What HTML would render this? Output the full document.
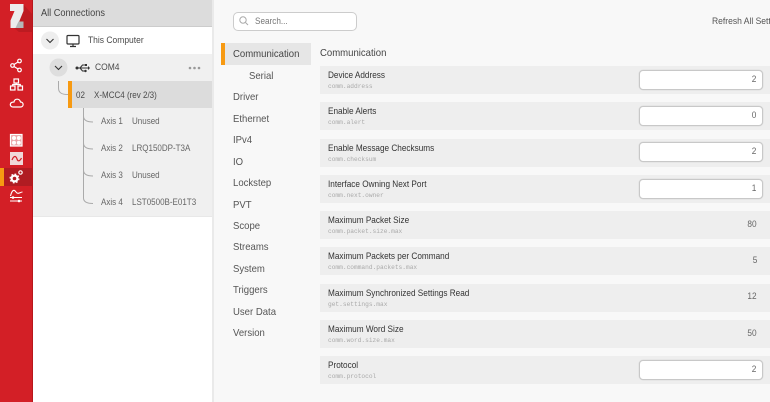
<!DOCTYPE html>
<html><head><meta charset="utf-8">
<style>
html,body{margin:0;padding:0;width:770px;height:402px;overflow:hidden;background:#f8f8f8;font-family:"Liberation Sans",sans-serif;color:#4a4a4a}
div,span{position:absolute;white-space:nowrap}
.t{font-size:9.6px;line-height:12px;transform:scaleX(.885);transform-origin:0 50%}
.a{color:#666;font-size:9.4px;transform:scaleX(.855)}
.n{font-size:10.5px;line-height:14px;left:233px;color:#555;transform:scaleX(.91);transform-origin:0 50%}
.r{left:320px;width:450px;height:28px;background:#eeeeee}
.l{left:8px;top:3px;font-size:9.4px;line-height:12px;color:#333;transform:scaleX(.875);transform-origin:0 50%}
.m{left:8px;top:16px;font-family:"Liberation Mono",monospace;font-size:6.2px;line-height:9px;color:#aaa}
.i{left:318.5px;top:3.5px;width:122px;height:18px;background:#fff;border:1px solid #c8c8c8;border-radius:4px;box-shadow:0 0 0 .5px #ddd}
.i span{right:5px;top:3px;font-size:9.5px;line-height:12px;color:#666;transform:scaleX(.87);transform-origin:100% 50%}
.v{right:13px;top:7.500px;font-size:9.5px;line-height:12px;color:#666;transform:scaleX(.87);transform-origin:100% 50%}
</style></head><body>
<div style="left:0;top:0;width:32px;height:402px;background:#d31f26"></div>
<div style="left:32px;top:0;width:1px;height:402px;background:#b8161c"></div>
<svg style="position:absolute;left:0;top:0" width="33" height="402" viewBox="0 0 33 402">
<path d="M23 4 L32 14 V32 H19 L14 28Z" fill="#bd1b21"/>
<path d="M10 4H23.500V11L19 22V28H10.500V20.500L14.500 11H10Z" fill="#ececec"/>
<path d="M18.500 21.500H23.500V28H15.500Z" fill="#b4b8b8"/>
<g fill="none" stroke="#fff" stroke-width="1.200">
<circle cx="19.500" cy="61" r="1.800"/><circle cx="12.500" cy="65.500" r="1.800"/><circle cx="19.500" cy="70" r="1.800"/><path d="M14 64.500 18 62M14 66.500 18 69"/>
<rect x="14" y="79" width="4.500" height="4"/><rect x="10.500" y="86" width="4.500" height="4"/><rect x="18" y="86" width="4.500" height="4"/><path d="M16.200 83V84.500M12.700 86V84.500H20.300V86"/>
<path d="M13 107H20.500C24 107 24 102 20.500 102C19.500 98 14.500 98.500 14 102C9 102 9.500 107 13 107Z"/>
</g>
<g fill="#fff">
<path d="M10.500 134.500H22V146H10.500Z" fill="#e9a5a8" stroke="#fff" stroke-width="1.200"/>
<circle cx="14" cy="138" r="2"/><circle cx="18.800" cy="138" r="2"/><circle cx="14" cy="142.800" r="2"/><circle cx="18.800" cy="142.800" r="2"/>
<rect x="10" y="152" width="13" height="13" fill="#f0d8d8"/>
</g>
<path d="M12 160C14 155 16 156 17 159C18 162 20 161 21.500 158" fill="none" stroke="#d31f26" stroke-width="1.200"/>
<rect x="0" y="168" width="32" height="18" fill="#b01c22"/>
<rect x="0" y="168" width="4" height="18" fill="#f79a12"/>
<g fill="none" stroke="#fff">
<circle cx="14.500" cy="178.500" r="2.900" stroke-width="2.200"/>
<circle cx="14.500" cy="178.500" r="4.400" stroke-width="1.200" stroke-dasharray="1.700 1.750"/>
<circle cx="20.500" cy="172.500" r="1.700" stroke-width="1.200"/>
<path d="M10.500 196C12 190 14 189 16 192C18 195 20 192 22.500 192M10 197.500H22M10 201H22" stroke-width="1.100"/>
</g>
<circle cx="13" cy="197.500" r="1.300" fill="#fff"/><circle cx="19" cy="201" r="1.300" fill="#fff"/>
</svg>

<div style="left:33px;top:0;width:179px;height:402px;background:#fff"></div>
<div style="left:212px;top:0;width:2px;height:402px;background:#eaeaea"></div>
<div style="left:33px;top:0;width:179px;height:26px;background:#dcdcdc;border-bottom:1px solid #ccc"></div>
<div class="t" style="left:41px;top:8px;color:#444;font-size:10px;transform:scaleX(.92)">All Connections</div>
<div style="left:33px;top:54px;width:179px;height:162px;background:#f0f0f0;box-shadow:0 1px 0 #e8e8e8"></div>
<div style="left:72px;top:81px;width:140px;height:27px;background:#dcdcdc"></div>
<div style="left:68px;top:81px;width:4px;height:27px;background:#f79a12"></div>
<svg style="position:absolute;left:33px;top:27px" width="180" height="190" viewBox="33 27 180 190">
<circle cx="50" cy="40.500" r="9" fill="#eeeeee"/>
<circle cx="58.500" cy="67.500" r="9" fill="#dedede"/>
<g fill="none" stroke="#333" stroke-width="1.100">
<path d="M46.500 39 50 42.500 53.500 39M55 66 58.500 69.500 62 66"/>
<rect x="67" y="35.500" width="12" height="8.500" rx="1" stroke-width="1.200"/><path d="M70 46.500H76M73 44V46.500" stroke-width="1.200"/>
<path d="M76 68H88M80 68L82.500 65H85M80 68L82.500 71H85"/>
</g>
<circle cx="77" cy="68" r="1.500" fill="#333"/><rect x="85" y="64" width="2" height="2" fill="#333"/><circle cx="85.500" cy="71" r="1.200" fill="#333"/><path d="M88 66V70L90 68Z" fill="#333"/>
<g fill="#999"><circle cx="190" cy="68" r="1.300"/><circle cx="194.500" cy="68" r="1.300"/><circle cx="199" cy="68" r="1.300"/></g>
<g fill="none" stroke="#aaa" stroke-width="1">
<path d="M58.500 81V88C58.500 93 62 94.500 68 94.500"/>
<path d="M83.500 108V198C83.500 202 87 203.500 93 203.500"/>
<path d="M83.500 116C83.500 120 87 122 93 122M83.500 143C83.500 147 87 149 93 149M83.500 170C83.500 174 87 176 93 176"/>
</g>
</svg>
<div class="t" style="left:88px;top:35px">This Computer</div>
<div class="t" style="left:95px;top:62px">COM4</div>
<div class="t a" style="left:76px;top:89px;color:#4a4a4a">02</div>
<div class="t a" style="left:94px;top:89px;color:#4a4a4a">X-MCC4 (rev 2/3)</div>
<div class="t a" style="left:101px;top:115px">Axis 1</div><div class="t a" style="left:132px;top:115px">Unused</div>
<div class="t a" style="left:101px;top:142px">Axis 2</div><div class="t a" style="left:132px;top:142px">LRQ150DP-T3A</div>
<div class="t a" style="left:101px;top:169px">Axis 3</div><div class="t a" style="left:132px;top:169px">Unused</div>
<div class="t a" style="left:101px;top:196px">Axis 4</div><div class="t a" style="left:132px;top:196px">LST0500B-E01T3</div>

<div style="left:233px;top:12px;width:122px;height:17px;background:#fff;border:1px solid #ccc;border-radius:5px"></div>
<svg style="position:absolute;left:238px;top:15px" width="12" height="12" viewBox="0 0 12 12"><circle cx="5" cy="5" r="3.200" fill="none" stroke="#aaa"/><path d="M7.500 7.500 10 10" stroke="#aaa"/></svg>
<div class="t" style="left:255px;top:15px;font-size:8.900px;transform:scaleX(.92);color:#777">Search...</div>
<div class="t" style="left:712px;top:15px;font-size:9.400px;transform:scaleX(.91);color:#555">Refresh All Settings</div>

<div style="left:221px;top:43px;width:90px;height:22px;background:#e6e6e6"></div>
<div style="left:221px;top:43px;width:4px;height:22px;background:#f79a12"></div>
<div class="n" style="top:47px;color:#444">Communication</div>
<div class="n" style="left:249px;top:69px">Serial</div>
<div class="n" style="top:90px">Driver</div>
<div class="n" style="top:112px">Ethernet</div>
<div class="n" style="top:133px">IPv4</div>
<div class="n" style="top:155px">IO</div>
<div class="n" style="top:176px">Lockstep</div>
<div class="n" style="top:198px">PVT</div>
<div class="n" style="top:219px">Scope</div>
<div class="n" style="top:240px">Streams</div>
<div class="n" style="top:262px">System</div>
<div class="n" style="top:283px">Triggers</div>
<div class="n" style="top:305px">User Data</div>
<div class="n" style="top:326px">Version</div>

<div class="n" style="left:320px;top:46px;color:#444">Communication</div>

<div class="r" style="top:66px"><div class="l">Device Address</div><div class="m">comm.address</div><div class="i"><span>2</span></div></div>
<div class="r" style="top:102px"><div class="l">Enable Alerts</div><div class="m">comm.alert</div><div class="i"><span>0</span></div></div>
<div class="r" style="top:138.500px"><div class="l">Enable Message Checksums</div><div class="m">comm.checksum</div><div class="i"><span>2</span></div></div>
<div class="r" style="top:175px"><div class="l">Interface Owning Next Port</div><div class="m">comm.next.owner</div><div class="i"><span>1</span></div></div>
<div class="r" style="top:211px"><div class="l">Maximum Packet Size</div><div class="m">comm.packet.size.max</div><div class="v">80</div></div>
<div class="r" style="top:247px"><div class="l">Maximum Packets per Command</div><div class="m">comm.command.packets.max</div><div class="v">5</div></div>
<div class="r" style="top:283.500px"><div class="l">Maximum Synchronized Settings Read</div><div class="m">get.settings.max</div><div class="v">12</div></div>
<div class="r" style="top:320px"><div class="l">Maximum Word Size</div><div class="m">comm.word.size.max</div><div class="v">50</div></div>
<div class="r" style="top:356px"><div class="l">Protocol</div><div class="m">comm.protocol</div><div class="i"><span>2</span></div></div>
</body></html>
